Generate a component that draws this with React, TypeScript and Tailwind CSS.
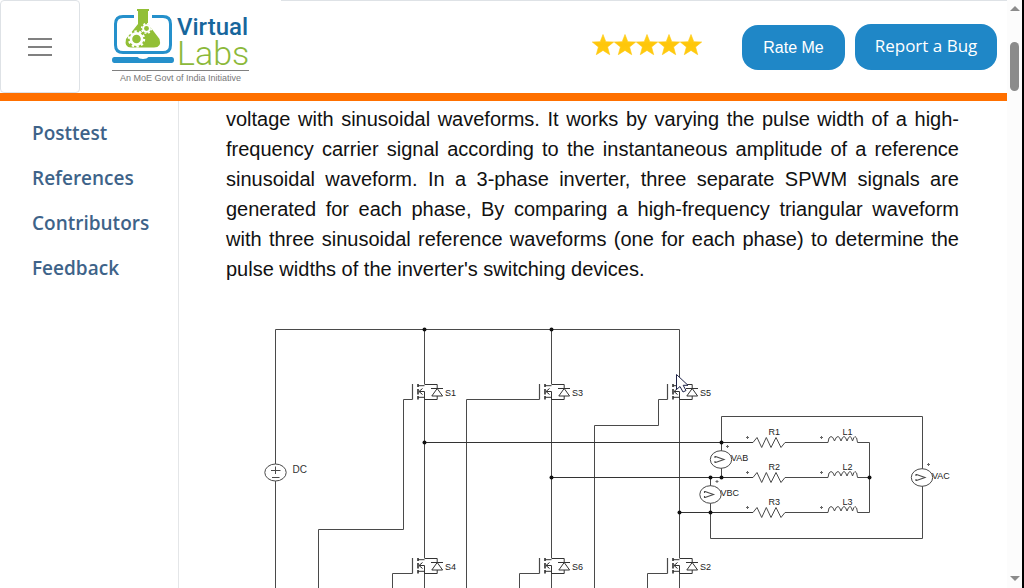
import React from "react";

const NAV_ITEMS = ["Posttest", "References", "Contributors", "Feedback"];

function FlaskLaptop() {
  return (
    <svg viewBox="0 0 62 56" className="h-14 w-[62px] shrink-0" aria-hidden="true">
      <path
        d="M22 8.5H11Q3.500 8.500 3.500 16V37Q3.500 44.500 11 44.500H51Q58.500 44.500 58.500 37V16Q58.500 8.500 51 8.500H40"
        fill="none"
        stroke="#2590cb"
        strokeWidth="3"
      />
      <path
        d="M2.500 49H25.500Q27 51 31 51Q35 51 36.500 49H59.500Q62 49 62 52T59.500 55H2.500Q0 55 0 52T2.500 49Z"
        fill="#2590cb"
      />
      <path
        d="M25 1H37V3H36V16L47.500 31Q50 39.500 42 39.500H19Q12 39.500 14 31L26 16V3H25Z"
        fill="#92bf36"
      />
      <circle cx="24.500" cy="31" r="5.600" fill="none" stroke="#fff" strokeWidth="2.600" />
      <circle cx="24.500" cy="31" r="7.600" fill="none" stroke="#fff" strokeWidth="2.200" strokeDasharray="2.390 2.390" />
      <circle cx="34.500" cy="20.500" r="3.400" fill="none" stroke="#fff" strokeWidth="1.900" />
      <circle cx="34.500" cy="20.500" r="4.800" fill="none" stroke="#fff" strokeWidth="1.600" strokeDasharray="1.880 1.880" />
    </svg>
  );
}

function Logo() {
  return (
    <a href="#home" className="ml-8 flex w-[137px] flex-col">
      <span className="flex h-[62px] gap-[3px]">
        <FlaskLaptop />
        <span className="flex flex-col pt-[7px] font-['Roboto',sans-serif]">
          <span className="text-2xl leading-6 font-medium text-[#17669c]">Virtual</span>
          <span className="text-[34px] leading-7 font-light text-[#8cb93a]">Labs</span>
        </span>
      </span>
      <span className="border-t border-[#808080] pt-px text-center font-['Liberation_Sans',sans-serif] text-[9px] leading-3 whitespace-nowrap text-[#777]">
        An MoE Govt of India Initiative
      </span>
    </a>
  );
}

function Stars() {
  return (
    <svg viewBox="0 0 110 22" className="h-[22px] w-[110px] shrink-0" role="img" aria-label="5 stars">
      <defs>
        <linearGradient id="gold" x1="0" y1="0" x2="0" y2="1">
          <stop offset="0" stopColor="#ffd21c" />
          <stop offset="0.500" stopColor="#ffc60a" />
          <stop offset="1" stopColor="#ffcc10" />
        </linearGradient>
      </defs>
      {[0, 22, 44, 66, 88].map((x) => (
        <path
          key={x}
          transform={`translate(${x} 0)`}
          d="M11 0.500L13.800 7.700L21.700 8L15.600 13L17.700 20.700L11 16.400L4.300 20.700L6.400 13L0.300 8L8.200 7.700Z"
          fill="url(#gold)"
          stroke="#ffc80f"
          strokeWidth="0.600"
          strokeLinejoin="round"
        />
      ))}
    </svg>
  );
}

function Header() {
  return (
    <header className="flex h-[101px] shrink-0 items-start border-b-8 border-[#ff7000] bg-white">
      <button
        type="button"
        aria-label="Menu"
        className="flex h-[93px] w-20 shrink-0 flex-col items-center justify-center gap-1.5 rounded border border-[#dee2e6]"
      >
        <span className="h-0.5 w-6 bg-[#808080]" />
        <span className="h-0.5 w-6 bg-[#808080]" />
        <span className="h-0.5 w-6 bg-[#808080]" />
      </button>
      <div className="flex w-[201px] shrink-0 pt-2">
        <Logo />
      </div>
      <div className="flex flex-1 items-start justify-end border-t border-[#dee2e6] pr-2.5">
        <div className="mt-[33px] mr-10">
          <Stars />
        </div>
        <button
          type="button"
          className="mt-6 mr-2.5 h-[45px] w-[103px] rounded-2xl bg-[#1f87c7] font-['Liberation_Sans',sans-serif] text-base text-white"
        >
          Rate Me
        </button>
        <button
          type="button"
          className="mt-[23px] h-[46px] w-[142px] rounded-2xl bg-[#1f87c7] pb-0.5 font-['Open_Sans',sans-serif] text-[17px] text-white"
        >
          Report a Bug
        </button>
      </div>
    </header>
  );
}

function Sidebar() {
  return (
    <nav className="flex w-[179px] shrink-0 flex-col gap-[18px] border-r border-[#e4e6e8] pt-[19px] pl-8">
      {NAV_ITEMS.map((item) => (
        <a
          key={item}
          href={`#${item.toLowerCase()}`}
          className="font-['Open_Sans',sans-serif] text-[19px] leading-[27px] font-semibold text-[#3e6389]"
        >
          {item}
        </a>
      ))}
    </nav>
  );
}

type Point = { x: number; y: number };

function Switch({ x, y, label }: Point & { label: string }) {
  return (
    <g transform={`translate(${x} ${y})`}>
      <path d="M-12 0V15.500" strokeWidth="1.200" />
      <path d="M-6.500 0V3M-6.500 5V10.500M-6.500 12V15.500" stroke="#222" strokeWidth="1.500" />
      <path d="M-6.500 1.700H0M-6.500 13.300H0M0 7.500H-5M0 7.500V15.500" stroke="#333" />
      <path d="M-2 4.500L-5.500 7.500L-2 10.500" stroke="#222" />
      <path d="M0 0.500H12.700V4.500M12.700 12V15.500H0" stroke="#333" />
      <path d="M6.500 4.500H18.500M12.700 4.500L7.300 12H18.100Z" stroke="#333" />
      <text x="20.500" y="12" fontSize="9" fill="#222" stroke="none">{label}</text>
    </g>
  );
}

function Meter({ x, y, label }: Point & { label: string }) {
  return (
    <g transform={`translate(${x} ${y})`}>
      <ellipse rx="10.700" ry="8.800" fill="#fff" />
      <path d="M-5.500 -3L3 0L-5.500 3M-6 -3.500V-1.500M-6 3.500V1.500" strokeWidth="1.100" />
      <text x="10" y="1.500" fontSize="9" fill="#222" stroke="none">{label}</text>
      <Mark x={6.500} y={-13} />
    </g>
  );
}

function Mark({ x, y }: Point) {
  return <path d={`M${x - 1.500} ${y}H${x + 1.500}M${x} ${y - 1.500}V${y + 1.500}`} stroke="#666" />;
}

function Load({ y, index }: { y: number; index: number }) {
  return (
    <g transform={`translate(0 ${y})`}>
      <path d="M753 0L757 -5L761.700 5L766.300 -5L771 5L776 -5L781 5L785 0H828" />
      <path d="M828 0Q828.500 -6 831 -6Q833 -6 834.500 -1.500Q836 -6 838 -6Q839.500 -6 841 -1.500Q842.500 -6 844 -6Q845.500 -6 847 -1.500Q848.500 -6 850 -6Q851.500 -6 852.500 -1.500Q854 -6 855 -6Q857 -6 857.500 0H869.500" />
      <Mark x={747.500} y={-5} />
      <Mark x={821.500} y={-5} />
      <text x="768.500" y="-7.500" fontSize="9" fill="#222" stroke="none">{`R${index}`}</text>
      <text x="842.500" y="-7.500" fontSize="9" fill="#222" stroke="none">{`L${index}`}</text>
    </g>
  );
}

const JUNCTIONS: Point[] = [
  { x: 424.500, y: 329.500 },
  { x: 551.500, y: 329.500 },
  { x: 424.500, y: 442.500 },
  { x: 721.500, y: 442.500 },
  { x: 551.500, y: 477.500 },
  { x: 710.500, y: 477.500 },
  { x: 721.500, y: 477.500 },
  { x: 869.500, y: 477.500 },
  { x: 679.500, y: 512.500 },
  { x: 710.500, y: 512.500 },
];

function InverterCircuit() {
  return (
    <svg
      viewBox="226 310 733 278"
      className="mt-[26px] w-full font-['Liberation_Sans',sans-serif]"
      fill="none"
      stroke="#4a4a4a"
      strokeWidth="1"
      role="img"
      aria-label="Three-phase inverter circuit"
    >
      <path d="M275.500 588V329.500H679.500V384M424.500 329.500V384M551.500 329.500V384" />
      <path d="M424.500 399V558M551.500 399V558M679.500 399V558M424.500 573V588M551.500 573V588M679.500 573V588" />
      <path d="M412.500 399.500H403.500V529.500H318.500V588M539.500 399.500H466.500V588M667.500 399.500H658.500V425.500H594.500V588" />
      <path d="M412.500 573.500H392.500V588M539.500 573.500H519.500V588M667.500 573.500H647.500V588" />
      <path d="M424.500 442.500H753M551.500 477.500H753M679.500 512.500H753" stroke="#333" />
      <path d="M721.500 477.500V416.500H922.500V538.500H710.500V477.500M869.500 442.500V512.500" />
      <ellipse cx="275.500" cy="472.500" rx="10.700" ry="8.500" fill="#fff" />
      <path d="M275.500 466.500V474M271 470.500H280.500M272 477.500H279.500" />
      <text x="292.500" y="473" fontSize="10" fill="#333" stroke="none">DC</text>
      <Switch x={424.500} y={384} label="S1" />
      <Switch x={551.500} y={384} label="S3" />
      <Switch x={679.500} y={384} label="S5" />
      <Switch x={424.500} y={558} label="S4" />
      <Switch x={551.500} y={558} label="S6" />
      <Switch x={679.500} y={558} label="S2" />
      <Load y={442.500} index={1} />
      <Load y={477.500} index={2} />
      <Load y={512.500} index={3} />
      <Meter x={721} y={459.500} label="VAB" />
      <Meter x={710.500} y={494.500} label="VBC" />
      <Meter x={922} y={477.500} label="VAC" />
      {JUNCTIONS.map((p) => (
        <circle key={`${p.x}-${p.y}`} cx={p.x} cy={p.y} r="2" fill="#111" stroke="none" />
      ))}
      <path
        d="M676.500 374.500V389.500L680 386.500L683 392L686 390.500L683.200 385.300H688Z"
        fill="#fff"
        stroke="#1e2348"
      />
    </svg>
  );
}

function Scrollbar() {
  return (
    <div className="flex w-[17px] shrink-0 flex-col items-center justify-between border-r-2 border-black bg-[#fcfcfc] pt-1.5 pb-[7px]" aria-hidden="true">
      <div className="flex flex-col items-center gap-[31px]">
        <svg viewBox="0 0 10 5" className="h-[5px] w-2.5">
          <path d="M5 0L10 5H0Z" fill="#8b8b8b" />
        </svg>
        <div className="h-[49px] w-[9px] rounded-full bg-[#8b8b8b]" />
      </div>
      <svg viewBox="0 0 10 5" className="h-[5px] w-2.5">
        <path d="M0 0H10L5 5Z" fill="#8b8b8b" />
      </svg>
    </div>
  );
}

export default function App() {
  return (
    <div className="flex h-screen overflow-hidden bg-white">
      <div className="flex min-w-0 flex-1 flex-col">
        <Header />
        <div className="flex min-h-0 flex-1">
          <Sidebar />
          <main className="min-w-0 flex-1 overflow-hidden pt-[3px] pr-12 pl-[47px]">
            <p className="text-justify font-['Liberation_Sans',sans-serif] text-xl leading-[30px] text-[#111]">
              voltage with sinusoidal waveforms. It works by varying the pulse width of a
              high-frequency carrier signal according to the instantaneous amplitude of a reference
              sinusoidal waveform. In a 3-phase inverter, three separate SPWM signals are generated
              for each phase, By comparing a high-frequency triangular waveform with three
              sinusoidal reference waveforms (one for each phase) to determine the pulse widths of
              the inverter's switching devices.
            </p>
            <InverterCircuit />
          </main>
        </div>
      </div>
      <Scrollbar />
    </div>
  );
}
